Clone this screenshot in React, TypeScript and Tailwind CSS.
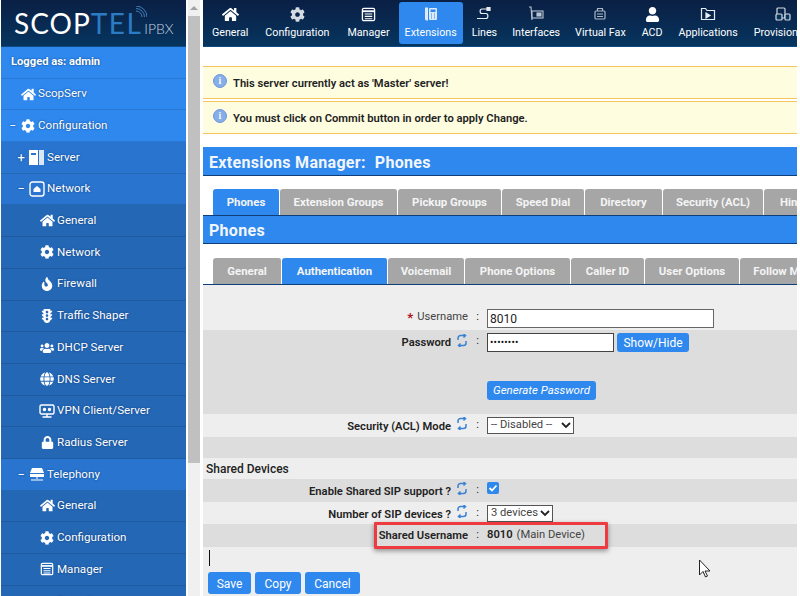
import React from "react";
import { FaHome, FaCog, FaFire, FaTrafficLight, FaUsers, FaGlobe, FaLock, FaUser } from "react-icons/fa";

const font = "[font-family:'Roboto','Noto_Sans',sans-serif]";

const Ic = ({ children, s = 16 }: { children: React.ReactNode; s?: number }) => (
  <svg width={s} height={s} viewBox="0 0 16 16" fill="none" stroke="currentColor" strokeWidth="1.4" className="shrink-0">
    {children}
  </svg>
);
const ManagerIcon = ({ s = 16 }: { s?: number }) => (
  <Ic s={s}><rect x="1.5" y="1.5" width="13" height="13" rx="1.5" /><path d="M2 4.5h12" strokeWidth="2" /><path d="M4 7.5h8M4 10h8M4 12.5h8" strokeWidth="1.2" /></Ic>
);
const ServerIcon = () => (
  <svg width="16" height="15" viewBox="0 0 16 15" className="shrink-0"><rect x="0" y="0" width="9" height="15" fill="#fff" /><rect x="10" y="0" width="5" height="15" fill="#dbe7f5" /><rect x="2" y="3" width="5" height="2" fill="#2874cf" /></svg>
);
const NetworkBox = () => (
  <Ic s={16}><rect x="1" y="1" width="14" height="14" rx="2.5" /><path d="M4.5 11V8l3.5-3 3.5 3v3z" fill="currentColor" stroke="none" /></Ic>
);
const Telephony = () => (
  <svg width="16" height="16" viewBox="0 0 16 16" fill="#fff" className="shrink-0"><path d="M3 2h10l2 5H1z" /><rect x="1" y="8" width="14" height="3" /><path d="M7.5 11h1v2h-1zM2 13.5h12v1H2z" /></svg>
);
const VpnIcon = () => (
  <Ic s={16}><rect x="1" y="2" width="14" height="9" rx="1.5" /><circle cx="5.5" cy="6.5" r="1" fill="currentColor" /><circle cx="10.5" cy="6.5" r="1" fill="currentColor" /><path d="M8 11v2.5M3.5 14h9" /></Ic>
);

type Side = { t: string; l: 0 | 1 | 2; mark?: string; icon: React.ReactNode };
const home = <FaHome size={15} className="shrink-0" />;
const cog = <FaCog size={14} className="shrink-0" />;
const sideItems: Side[] = [
  { t: "ScopServ", l: 0, icon: home },
  { t: "Configuration", l: 0, mark: "−", icon: cog },
  { t: "Server", l: 1, mark: "+", icon: <ServerIcon /> },
  { t: "Network", l: 1, mark: "−", icon: <NetworkBox /> },
  { t: "General", l: 2, icon: home },
  { t: "Network", l: 2, icon: cog },
  { t: "Firewall", l: 2, icon: <FaFire size={14} className="shrink-0" /> },
  { t: "Traffic Shaper", l: 2, icon: <FaTrafficLight size={14} className="shrink-0" /> },
  { t: "DHCP Server", l: 2, icon: <FaUsers size={14} className="shrink-0" /> },
  { t: "DNS Server", l: 2, icon: <FaGlobe size={14} className="shrink-0" /> },
  { t: "VPN Client/Server", l: 2, icon: <VpnIcon /> },
  { t: "Radius Server", l: 2, icon: <FaLock size={13} className="shrink-0" /> },
  { t: "Telephony", l: 1, mark: "−", icon: <Telephony /> },
  { t: "General", l: 2, icon: home },
  { t: "Configuration", l: 2, icon: cog },
  { t: "Manager", l: 2, icon: <ManagerIcon s={14} /> },
  { t: "Security", l: 2, icon: <FaUsers size={14} className="shrink-0" /> },
];

const SideRow = ({ it }: { it: Side }) => (
  <div
    className={`flex h-[31.7px] shrink-0 items-center border-b text-[11.600px] text-white [text-shadow:0_0_2px_#0b3a75] ${
      it.l === 0 ? "border-[#2a78d6] bg-[#2e88ee]" : it.l === 1 ? "border-[#2467b5] bg-[#2874cf]" : "border-[#1f5ba3] bg-[#2467b5]"
    }`}
  >
    {it.l === 2 ? (
      <div className="flex w-[55px] justify-end pr-[1px]"><span className="flex w-[16px] justify-center">{it.icon}</span></div>
    ) : it.l === 1 ? (
      <div className="flex w-[45px] items-center justify-end gap-[4px] pr-[1px]"><span className="text-[13px]">{it.mark}</span><span className="flex w-[16px] justify-center">{it.icon}</span></div>
    ) : (
      <div className="flex w-[36px] items-center justify-end gap-[4px] pr-[1px]"><span className="text-[12px]">{it.mark}</span><span className="flex w-[16px] justify-center">{it.icon}</span></div>
    )}
    <span className="ml-[1px]">{it.t}</span>
  </div>
);

const Sidebar = () => (
  <div className="ml-[1px] flex h-full w-[185px] shrink-0 flex-col overflow-hidden">
    <div className="relative flex h-[47px] shrink-0 items-center border-b border-[#0d4a86] bg-gradient-to-b from-[#0a1f44] to-[#05355f] pl-[13px] [font-family:'Lato','Liberation_Sans',sans-serif]">
      <span className="text-[28px] font-normal leading-none tracking-[1px] text-white">SCOP</span>
      <span className="text-[28px] font-normal leading-none tracking-[1.500px] text-[#2b7cc4]">TEL</span>
      <span className="ml-[2px] mt-[11px] text-[14px] font-light leading-none text-[#c3d3e2]">IPBX</span>
      <svg width="12" height="12" viewBox="0 0 12 12" fill="none" stroke="#3e7fb8" strokeWidth="1" className="absolute left-[134px] top-[6px]">
        <path d="M1 5a6 6 0 0 1 6 6M1 2.500a8.500 8.500 0 0 1 8.500 8.500M1 0a11 11 0 0 1 11 11" />
      </svg>
    </div>
    <div className="flex h-[31.7px] shrink-0 items-center border-b border-[#2a78d6] bg-[#2e88ee] pl-[10px] pt-[1px] text-[11.200px] font-bold text-white [text-shadow:0_0_2px_#0b3a75]">
      Logged as: admin
    </div>
    {sideItems.map((it, i) => <SideRow key={i} it={it} />)}
  </div>
);

const Scrollbar = () => (
  <div className="ml-[2px] flex h-full w-[12px] shrink-0 flex-col bg-[#f0f0f0]">
    <div className="flex h-[16px] shrink-0 items-center justify-center">
      <div className="h-0 w-0 border-x-[4px] border-b-[4px] border-x-transparent border-b-[#a3a3a3]" />
    </div>
    <div className="h-[447px] shrink-0 bg-[#c0c0c0]" />
  </div>
);

const topItems: { t: string; icon: React.ReactNode; cls: string }[] = [
  { t: "General", cls: "px-[8px]", icon: <FaHome size={17} /> },
  { t: "Configuration", cls: "ml-[1px] px-[8px]", icon: <FaCog size={15} className="text-[#d5dbe2]" /> },
  { t: "Manager", cls: "ml-[2px] px-[8px]", icon: <ManagerIcon s={15} /> },
  {
    t: "Extensions", cls: "mx-[1px] bg-[#2e88ee] px-[6px]",
    icon: (
      <svg width="16" height="16" viewBox="0 0 16 16" fill="#dcebfb"><path d="M2 1.500h3v13H3.500C2.500 14.500 2 13.500 2 12.500z" /><rect x="6" y="2" width="8" height="12" rx="1" /><rect x="7.500" y="3.500" width="5" height="2.500" fill="#2e88ee" /><path d="M8 8h1M11 8h1M8 10h1M11 10h1M8 12h1M11 12h1" stroke="#2e88ee" /></svg>
    ),
  },
  { t: "Lines", cls: "px-[8px]", icon: <svg width="16" height="16" viewBox="0 0 16 16" fill="none" stroke="#e8edf2" strokeWidth="1.200"><path d="M11 3H6C3.500 3 3.500 7.500 6 7.500h4c2.500 0 2.500 5 0 5H1" /><path d="M11 1.500h3v3h-3z" fill="#e8edf2" /></svg> },
  { t: "Interfaces", cls: "px-[7px]", icon: <svg width="16" height="16" viewBox="0 0 16 16" fill="none" stroke="#b9c5d1" strokeWidth="1.100"><path d="M1 1h2l1 13" /><rect x="4" y="5" width="11" height="7" /><rect x="9" y="7" width="4" height="3" fill="#b9c5d1" /></svg> },
  { t: "Virtual Fax", cls: "px-[8px]", icon: <svg width="16" height="16" viewBox="0 0 16 16" fill="none" stroke="#a9b7c5" strokeWidth="1.200"><rect x="3" y="5" width="10" height="8" rx="1" /><path d="M5.500 5V2.500h5V5M5 8h6M5 10.500h6" /></svg> },
  { t: "ACD", cls: "px-[8px]", icon: <FaUser size={15} /> },
  { t: "Applications", cls: "px-[8px]", icon: <svg width="16" height="16" viewBox="0 0 16 16" fill="none" stroke="#e8edf2" strokeWidth="1.200"><path d="M1.500 13.500v-11h4l1.500 2h7.500v9z" /><path d="M6 7l4 2.500L6 12z" fill="#e8edf2" /></svg> },
  { t: "Provisioning", cls: "px-[8px]", icon: <svg width="16" height="16" viewBox="0 0 16 16" fill="none" stroke="#d5dbe2" strokeWidth="1.200"><rect x="2" y="2" width="8" height="10" rx="1" /><rect x="1" y="8" width="6" height="6" rx="1" fill="#05355f" /><rect x="10" y="8" width="5" height="6" rx="1" fill="#05355f" /></svg> },
];

const TopBar = () => (
  <div className="flex h-[47px] shrink-0 items-start border-b border-[#0d4a86] bg-gradient-to-b from-[#0a1f44] to-[#05355f] pl-[1px] text-[10.700px] text-white">
    {topItems.map((it) => (
      <div key={it.t} className={`mt-[2px] flex h-[42px] shrink-0 flex-col items-center rounded-[3px] pt-[4px] ${it.cls}`}>
        <span className="flex h-[16px] items-center">{it.icon}</span>
        <span className="mt-[3px] whitespace-nowrap leading-[16px]">{it.t}</span>
      </div>
    ))}
  </div>
);

const Alert = ({ children }: { children: React.ReactNode }) => (
  <div className="flex h-[33px] shrink-0 items-center border-y border-[#f5c55e] bg-[#fffde0] pl-[10px] text-[11.200px] font-semibold text-[#222]">
    <span className="mb-[3px] mr-[6px] flex h-[14px] w-[14px] items-center justify-center rounded-full border border-[#6d98d8] bg-[#86aee8] font-serif text-[9px] leading-none text-white">i</span>
    <span className="mt-[4px]">{children}</span>
  </div>
);

const Tabs = ({ items, active, widths }: { items: string[]; active: string; widths: number[] }) => (
  <div className="flex h-[26px] shrink-0 items-end pl-[10px]">
    {items.map((t, i) => (
      <div
        key={t}
        style={{ width: widths[i] }}
        className={`flex h-[26px] shrink-0 items-center justify-center whitespace-nowrap rounded-t-[3px] border-r border-white pt-[1px] text-[11.400px] font-bold text-[#f4f4f4] ${t === active ? "bg-[#2e88ee]" : "bg-[#a6a6a6]"}`}
      >
        {t}
      </div>
    ))}
  </div>
);

const Refresh = () => (
  <svg width="12" height="13" viewBox="0 0 12 13" fill="none" stroke="#3b82d6" strokeWidth="1.500" className="mb-[3px] ml-[5px] shrink-0">
    <path d="M2 6V4a2.500 2.500 0 0 1 2.500-2.500H9M7.500 0 9.500 1.500 7.500 3.500" />
    <path d="M10 7v2a2.500 2.500 0 0 1-2.500 2.500H3M4.500 13 2.500 11.500 4.500 9.500" />
  </svg>
);

const Row = ({ label, bold = true, refresh, req, children, h, bg, top, labelCls = "", textCls = "mt-[4px]" }: { label?: string; bold?: boolean; refresh?: boolean; req?: boolean; children?: React.ReactNode; h: string; bg: string; top?: string; labelCls?: string; textCls?: string }) => (
  <div className={`flex shrink-0 text-[11.200px] text-[#222] ${h} ${bg} ${top ?? "items-center"}`}>
    <div className={`flex w-[265px] shrink-0 items-center justify-end ${bold ? "font-semibold" : "text-[#444]"} ${labelCls}`}>
      {req && <span className="mr-[4px] text-[13px] font-bold leading-none text-[#b01020]">*</span>}
      <span className={textCls}>{label}</span>
      {refresh && <Refresh />}
    </div>
    <div className={`w-[19px] shrink-0 text-center ${labelCls}`}>:</div>
    <div className="flex items-center gap-[3px]">{children}</div>
  </div>
);

const Btn = ({ children, className = "" }: { children: React.ReactNode; className?: string }) => (
  <div className={`flex items-center justify-center rounded-[3px] bg-[#2e88ee] text-xs text-white ${className}`}>{children}</div>
);

const Select = ({ t, w }: { t: string; w: string }) => (
  <div className={`flex h-[17px] items-center justify-between whitespace-nowrap border border-[#555] bg-white pl-[3px] pr-[2px] text-[11.200px] text-[#444] ${w}`}>
    <span>{t}</span>
    <svg width="10" height="7" viewBox="0 0 10 7" fill="none" stroke="#222" strokeWidth="1.800"><path d="M1 1l4 4 4-4" /></svg>
  </div>
);

const Main = () => (
  <div className="ml-[3px] flex h-full w-[594px] shrink-0 flex-col overflow-hidden bg-white">
    <TopBar />
    <div className="h-[19px] shrink-0" />
    <Alert>This server currently act as 'Master' server!</Alert>
    <div className="h-[2px] shrink-0" />
    <Alert>You must click on Commit button in order to apply Change.</Alert>
    <div className="h-[13px] shrink-0" />
    <div className="flex h-[29px] shrink-0 items-center border-b border-[#0f3f78] bg-[#2e88ee] pl-[6px] pt-[3px] text-[16px] font-bold tracking-[0.3px] text-[#f3f6fa]">
      <span>Extensions Manager:</span><span className="ml-[9px]">Phones</span>
    </div>
    <div className="h-[13px] shrink-0" />
    <Tabs items={["Phones", "Extension Groups", "Pickup Groups", "Speed Dial", "Directory", "Security (ACL)", "Hints"]} active="Phones" widths={[67, 118, 104, 83, 78, 101, 60]} />
    <div className="flex h-[29px] shrink-0 items-center border-y border-[#0f3f78] bg-[#2e88ee] pl-[6px] pt-[2px] text-[16px] font-bold tracking-[0.3px] text-[#f3f6fa]">Phones</div>
    <div className="h-[14px] shrink-0" />
    <Tabs items={["General", "Authentication", "Voicemail", "Phone Options", "Caller ID", "User Options", "Follow Me"]} active="Authentication" widths={[69, 106, 77, 106, 74, 95, 80]} />
    <div className="relative flex min-h-0 flex-1 flex-col border-t border-[#0f3f78] bg-[#eeeeee]">
      <Row label="Username" bold={false} req h="h-[45px]" bg="bg-[#eeeeee]" top="items-end pb-[2px]" labelCls="mb-[2px]" textCls="">
        <div className="flex h-[19px] w-[227px] items-center border border-[#666] bg-white pl-[2px] text-xs text-[#222]">8010</div>
      </Row>
      <Row label="Password" refresh h="h-[84px]" bg="bg-[#dddddd]" top="items-start pt-[3px]" textCls="mt-[2px]">
        <div className="flex flex-col items-start gap-[29px]">
          <div className="flex gap-[3px]">
            <div className="flex h-[19px] w-[127px] items-center border border-[#444] bg-white pl-[2px] text-[10px] leading-none tracking-[0.2px] text-[#111]">••••••••</div>
            <Btn className="h-[19px] w-[72px]">Show/Hide</Btn>
          </div>
          <Btn className="h-[19px] w-[109px] text-[11.500px] italic">Generate Password</Btn>
        </div>
      </Row>
      <Row label="Security (ACL) Mode" refresh h="h-[23px]" bg="bg-[#eeeeee]">
        <Select t="-- Disabled --" w="w-[87px]" />
      </Row>
      <div className="h-[21px] shrink-0 bg-[#dddddd]" />
      <div className="flex h-[21px] shrink-0 items-center bg-[#eeeeee] pl-[3px] text-xs font-medium text-[#222]">Shared Devices</div>
      <Row label="Enable Shared SIP support ?" refresh h="h-[23px]" bg="bg-[#dddddd]">
        <span className="mb-[5px] flex h-[12px] w-[12px] items-center justify-center rounded-[2px] bg-[#2e88ee]">
          <svg width="10" height="10" viewBox="0 0 10 10" fill="none" stroke="#fff" strokeWidth="1.800"><path d="M1.500 5l2.500 2.500 4.500-5" /></svg>
        </span>
      </Row>
      <Row label="Number of SIP devices ?" refresh h="h-[22px]" bg="bg-[#eeeeee]">
        <Select t="3 devices" w="w-[66px]" />
      </Row>
      <Row label="Shared Username" h="h-[23px]" bg="bg-[#dddddd]" textCls="mt-[2px]">
        <span className="font-semibold">8010</span><span className="ml-[1px] text-[#444]">(Main Device)</span>
      </Row>
      <div className="h-[25px] shrink-0 pl-[6px] pt-[3px]"><div className="h-[16px] w-[1px] bg-[#111]" /></div>
      <div className="flex gap-[4px] pl-[5px]">
        <Btn className="h-[22px] w-[43px] pt-[1px]">Save</Btn>
        <Btn className="h-[22px] w-[46px] pt-[1px]">Copy</Btn>
        <Btn className="h-[22px] w-[55px] pt-[1px]">Cancel</Btn>
      </div>
      <div className="absolute left-[171px] top-[237px] h-[27px] w-[234px] rounded-[1px] border-[3px] border-[#ee3b42] shadow-[0_2px_5px_rgba(0,0,0,0.4)]" />
      <svg width="14" height="20" viewBox="0 0 14 20" fill="#fff" stroke="#222" strokeWidth="1" className="absolute left-[495px] top-[274px]">
        <path d="M1.500 1v15l3.500-3.500 2.500 5.500 2-1-2.500-5h5z" />
      </svg>
    </div>
  </div>
);

export default function App() {
  return (
    <div className={`flex h-[596px] w-[800px] overflow-hidden bg-white ${font}`}>
      <Sidebar />
      <Scrollbar />
      <Main />
    </div>
  );
}
